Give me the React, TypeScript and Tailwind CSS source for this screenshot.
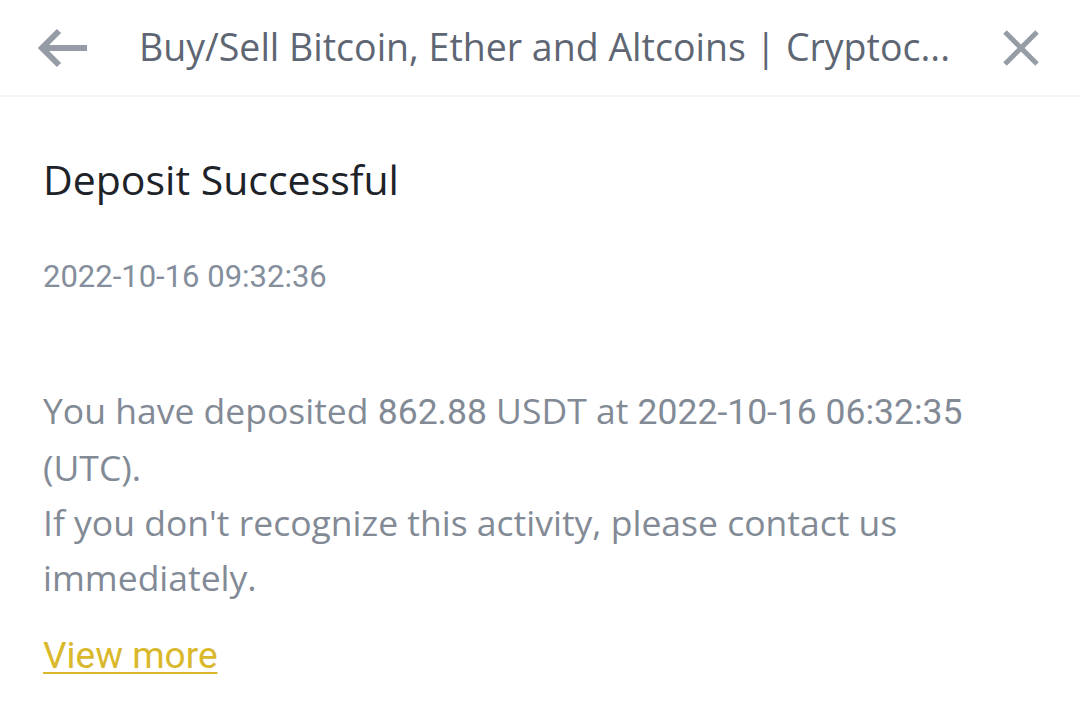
import React from 'react';

const ArrowLeft = () => (
  <svg width="50" height="40" viewBox="0 0 50 40" fill="none">
    <path d="M49 20H4M21 3L4 20l17 17" stroke="#959ca6" strokeWidth="6" />
  </svg>
);

const CloseIcon = () => (
  <svg width="38" height="38" viewBox="0 0 38 38" fill="none">
    <path d="M3 3l32 32M35 3L3 35" stroke="#959ca6" strokeWidth="5" />
  </svg>
);

const App = () => {
  return (
    <div className="min-h-screen w-[1080px] bg-white font-['Open_Sans','Noto_Sans',sans-serif]">
      {/* Header */}
      <header className="flex h-[97px] items-center border-b-2 border-[#f5f5f5] pl-[38px] pr-[40px]">
        <ArrowLeft />
        <h1 className="ml-[51px] mr-[50px] flex-1 truncate text-[37.5px] text-[#5e6673]">
          Buy/Sell Bitcoin, Ether and Altcoins | Cryptoc...
        </h1>
        <CloseIcon />
      </header>

      <main className="px-[43px]">
        <h2 className="mt-[58px] text-[41px] leading-[48px] text-[#1e2329]">Deposit Successful</h2>

        <p className="mt-[57px] font-['Roboto',sans-serif] text-[31px] leading-[34px] text-[#848e9c]">
          2022-10-16 09:32:36
        </p>

        <div className="mt-[89px] text-[35.5px] leading-[55px] text-[#828a96]">
          <p>
            You have deposited <span className="font-['Roboto',sans-serif]">862.88</span> USDT at{' '}
            <span className="font-['Roboto',sans-serif]">2022-10-16 06:32:35</span> (UTC).
          </p>
          <p>If you don't recognize this activity, please contact us immediately.</p>
        </div>

        <a
          href="#"
          className="mt-[23px] inline-block font-['Roboto',sans-serif] text-[37px] leading-[55px] text-[#d9b82c] underline decoration-2 underline-offset-4"
        >
          View more
        </a>
      </main>
    </div>
  );
};

export default App;
